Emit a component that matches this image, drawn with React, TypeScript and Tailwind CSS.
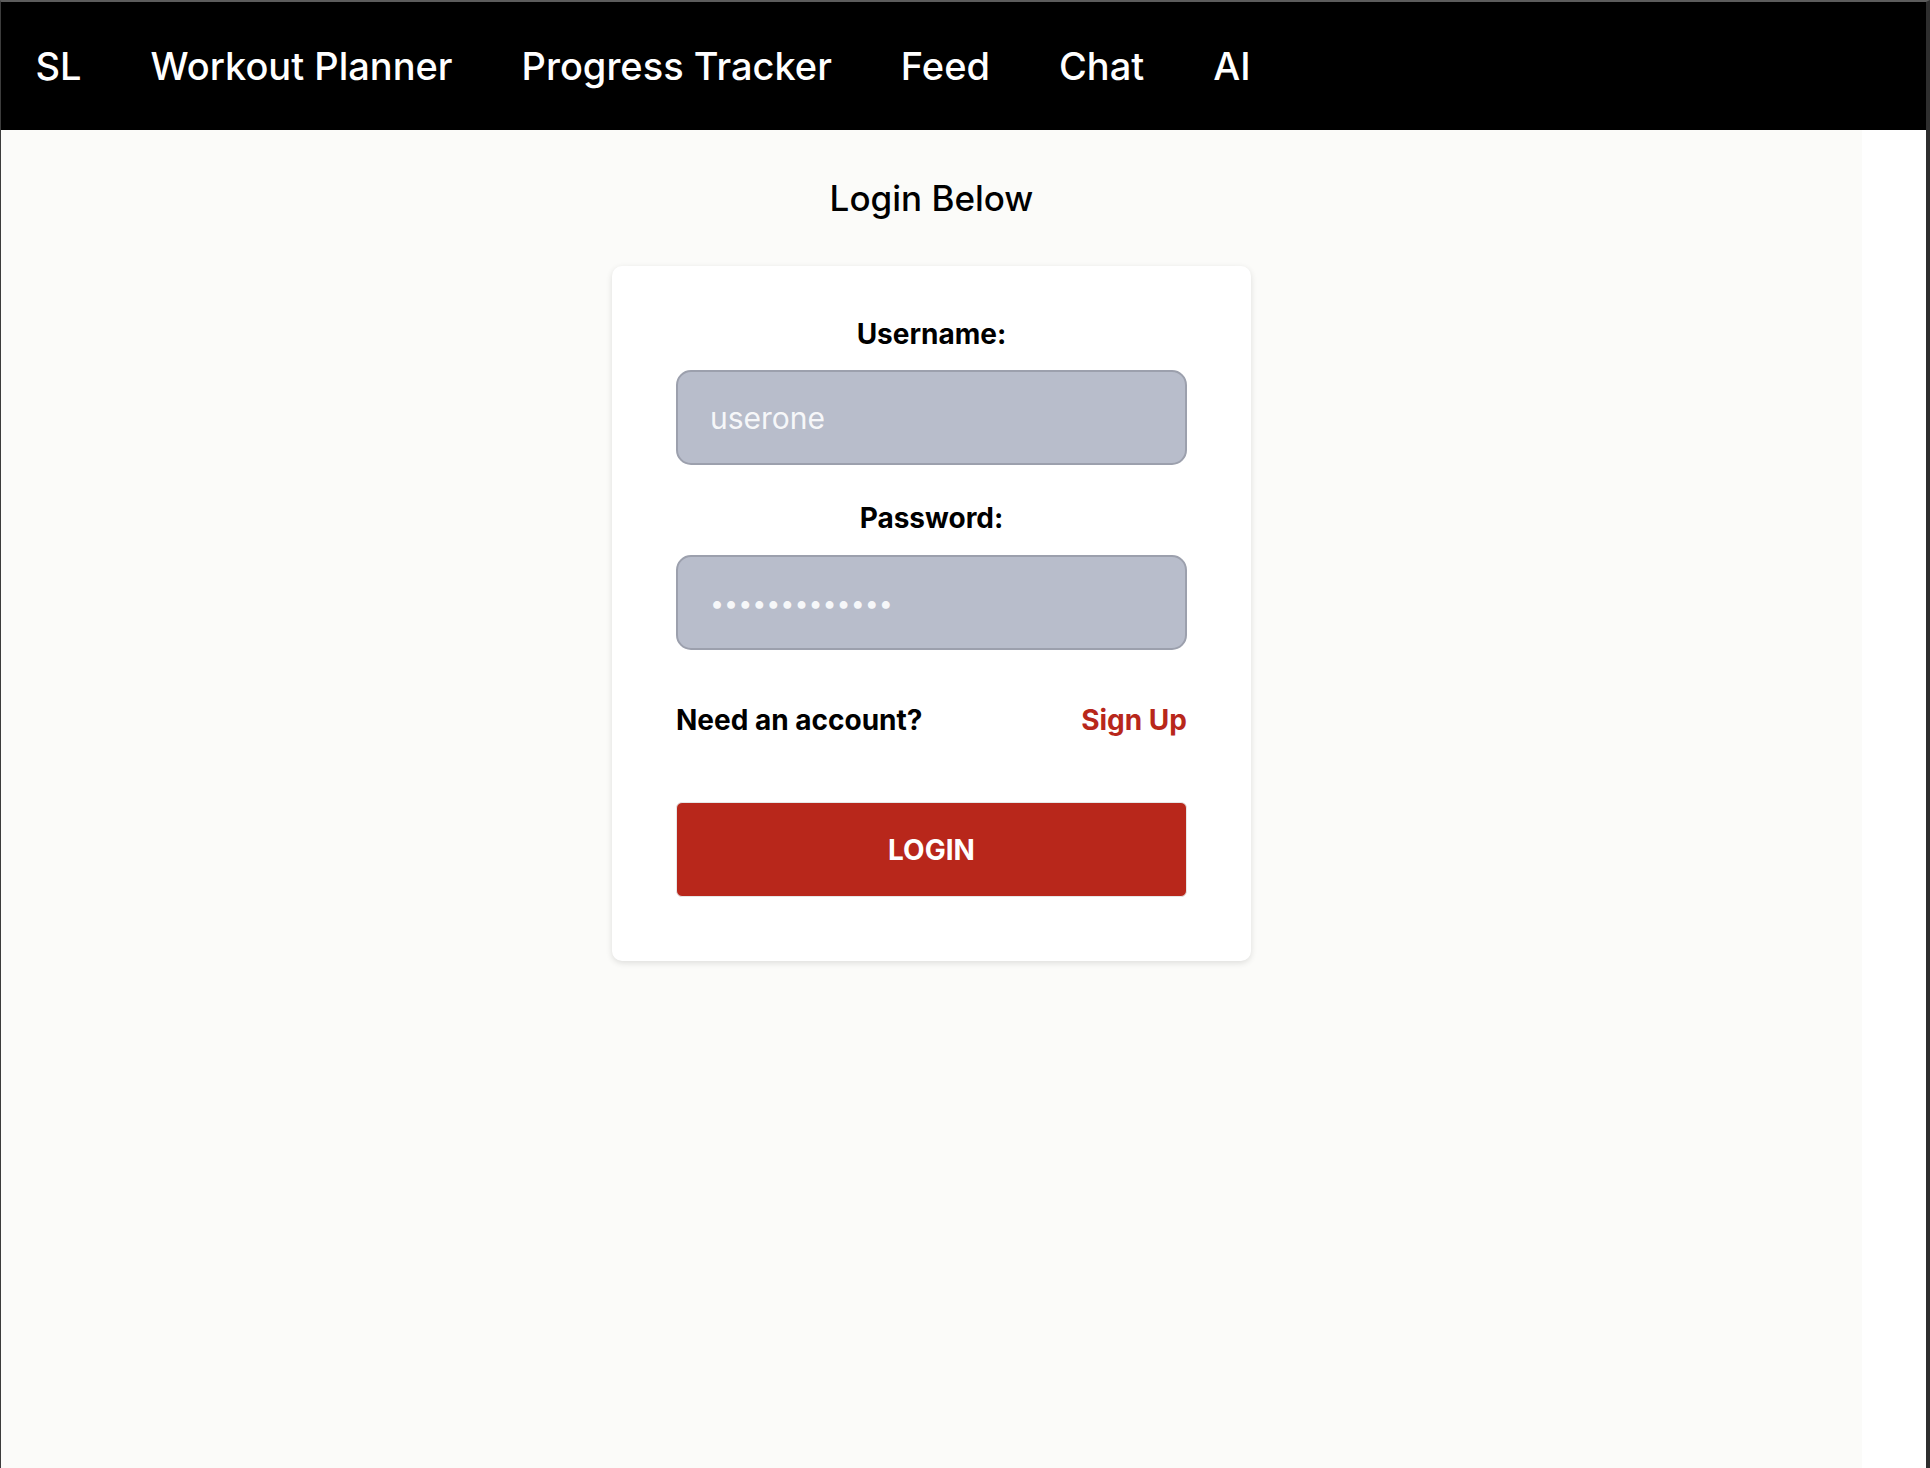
import React, { useState } from 'react';

const navLinks = ['SL', 'Workout Planner', 'Progress Tracker', 'Feed', 'Chat', 'AI'];

const App: React.FC = () => {
  const [username, setUsername] = useState('userone');
  const [password, setPassword] = useState('password12345');

  return (
    <div
      className="h-[1468px] w-[1930px] flex flex-col bg-white border-t-2 border-l border-r-4 border-t-[#5c5c5c] border-l-[#3c3c3c] border-r-[#2e2e2e] overflow-hidden"
      style={{ fontFamily: 'Inter, "Noto Sans", sans-serif' }}
    >
      {/* Top nav */}
      <nav className="h-[128px] shrink-0 bg-black flex items-center">
        {navLinks.map((link) => (
          <a
            key={link}
            href="#"
            className="px-[34.5px] text-[38px] font-medium text-white no-underline"
          >
            {link}
          </a>
        ))}
      </nav>

      <div className="flex flex-1">
        <main className="w-[1861px] bg-[#fbfbf9] flex flex-col items-center">
          <h1 className="mt-[44px] text-[35px] leading-[48px] font-medium text-black">Login Below</h1>

          {/* Login card */}
          <form
            className="mt-[44px] w-[639px] bg-white rounded-[10px] shadow-[0_2px_6px_rgba(0,0,0,0.12)] px-[64px] pt-[48px] pb-[64px] flex flex-col"
            onSubmit={(e) => e.preventDefault()}
          >
            <label htmlFor="username" className="block text-center text-[28px] leading-[40px] font-bold text-black">
              Username:
            </label>
            <input
              id="username"
              type="text"
              value={username}
              onChange={(e) => setUsername(e.target.value)}
              className="mt-[16px] h-[95px] w-full rounded-[15px] border-2 border-[#9ca0ad] bg-[#b8bdcb] px-[32px] text-[30px] text-[#f6f7f9] outline-none"
            />

            <label htmlFor="password" className="mt-[33px] block text-center text-[28px] leading-[40px] font-bold text-black">
              Password:
            </label>
            <input
              id="password"
              type="password"
              value={password}
              onChange={(e) => setPassword(e.target.value)}
              className="mt-[17px] h-[95px] w-full rounded-[15px] border-2 border-[#9ca0ad] bg-[#b8bdcb] px-[32px] text-[25px] text-[#f6f7f9] outline-none"
            />

            <div className="mt-[50px] flex items-center justify-between text-[28px] leading-[40px] font-bold">
              <span className="text-black">Need an account?</span>
              <a href="#" className="text-[#b8271b] no-underline">
                Sign Up
              </a>
            </div>

            <button
              type="submit"
              className="mt-[62px] h-[95px] w-full rounded-[6px] border border-[#e6e6e6] bg-[#b8271b] text-[28px] font-bold text-white"
            >
              LOGIN
            </button>
          </form>
        </main>
        <div className="flex-1 bg-white" />
      </div>
    </div>
  );
};

export default App;
